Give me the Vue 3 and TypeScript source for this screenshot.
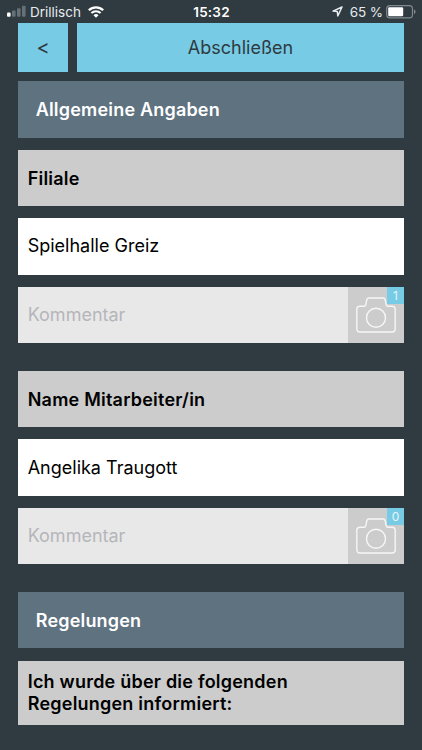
<script setup lang="ts">
interface Field {
  label: string
  value: string
  photos: number
}

const fields: Field[] = [
  { label: 'Filiale', value: 'Spielhalle Greiz', photos: 1 },
  { label: 'Name Mitarbeiter/in', value: 'Angelika Traugott', photos: 0 },
]
</script>

<template>
  <div class="screen">
    <div class="status">
      <div class="side">
        <svg class="signal" width="19" height="12" viewBox="0 0 19 12">
          <rect x="0" y="7.4" width="3.6" height="4.4" rx="1" fill="#fff" />
          <rect x="5" y="5.4" width="3.6" height="6.4" rx="1" fill="#667077" />
          <rect x="10" y="3.2" width="3.6" height="8.6" rx="1" fill="#667077" />
          <rect x="15" y="0.8" width="3.6" height="11" rx="1" fill="#667077" />
        </svg>
        <span class="carrier">Drillisch</span>
        <svg class="wifi" width="16" height="12" viewBox="0 0 16 12">
          <path d="M.8 4.2a10.4 10.4 0 0 1 14.4 0" fill="none" stroke="#fff" stroke-width="2.2" />
          <path d="M3.4 7a6.6 6.6 0 0 1 9.2 0" fill="none" stroke="#fff" stroke-width="2" />
          <path d="M5.5 9.2a3.6 3.6 0 0 1 5 0L8 11.7z" fill="#fff" />
        </svg>
      </div>
      <span class="clock">15:32</span>
      <div class="side right">
        <svg class="arrow" width="11" height="11" viewBox="0 0 11 11">
          <path d="M10 1 1 5.1l4.3.5.5 4.4z" fill="none" stroke="#e8ebed" stroke-width="1.5" stroke-linejoin="round" />
        </svg>
        <span class="percent">65 %</span>
        <svg class="battery" width="30" height="14" viewBox="0 0 30 14">
          <rect x="0.7" y="0.7" width="25.8" height="12.2" rx="3.2" fill="none" stroke="#828a8e" stroke-width="1.2" />
          <rect x="2.2" y="2.3" width="15" height="9" rx="1.2" fill="#fff" />
          <path d="M28 4.6c2 .7 2 3.8 0 4.5z" fill="#828a8e" />
        </svg>
      </div>
    </div>

    <header class="toolbar">
      <button class="back">&lt;</button>
      <button class="finish">Abschließen</button>
    </header>

    <main class="form">
      <h2 class="section">Allgemeine Angaben</h2>
      <section v-for="field in fields" :key="field.label" class="group">
        <div class="label">{{ field.label }}</div>
        <div class="value">{{ field.value }}</div>
        <div class="comment">
          <span class="placeholder">Kommentar</span>
          <button class="camera">
            <svg width="40" height="36" viewBox="0 0 40 36" fill="none" stroke="#f6f6f6" stroke-width="1.4">
              <path d="M4 9.3h3.7c1.5 0 2-.7 2.2-2l.6-3.4C10.8 2.2 11.5 1 13 1h14c1.5 0 2.2 1.2 2.500 2.9l.6 3.4c.2 1.3.7 2 2.2 2H36c2 0 3.2 1.2 3.2 3.2v19.3c0 2-1.2 3.2-3.2 3.2H4c-2 0-3.2-1.2-3.2-3.2V12.500c0-2 1.2-3.2 3.2-3.2z" />
              <circle cx="20" cy="20.7" r="9.5" />
            </svg>
            <span class="badge">{{ field.photos }}</span>
          </button>
        </div>
      </section>
      <h2 class="section">Regelungen</h2>
      <div class="label tall">Ich wurde über die folgenden<br />Regelungen informiert:</div>
    </main>
  </div>
</template>

<style>
body {
  background: #2f3a41;
}
</style>

<style scoped>
.screen {
  box-sizing: border-box;
  width: 422px;
  height: 750px;
  overflow: hidden;
  background: #2f3a41;
  font-family: Inter, "Liberation Sans", sans-serif;
  color: #000;
}
.status {
  display: flex;
  align-items: center;
  height: 22.7px;
  padding: 1px 6px 0 7px;
  box-sizing: border-box;
  font-size: 13.5px;
  line-height: 20px;
  color: #e8ebed;
}
.side {
  display: flex;
  flex: 1;
  align-items: center;
}
.right {
  justify-content: flex-end;
}
.signal {
  margin-bottom: 1px;
}
.carrier {
  margin-left: 4px;
}
.wifi {
  margin-left: 7px;
}
.clock {
  font-weight: 600;
  letter-spacing: 0.2px;
  color: #fff;
}
.arrow {
  margin-right: 7px;
}
.percent {
  letter-spacing: -0.1px;
}
.battery {
  margin-left: 3px;
}
.toolbar {
  display: flex;
  gap: 9px;
  height: 49.6px;
  padding: 0 18px;
}
button {
  border: 0;
  padding: 0;
  font: inherit;
  color: #2f3a41;
  background: #78cbe5;
}
.back {
  width: 50px;
  font-size: 20px;
}
.finish {
  flex: 1;
  font-size: 18px;
}
.form {
  display: flex;
  flex-direction: column;
  gap: 12.2px;
  padding: 9px 18px 0;
}
.section,
.label,
.value,
.comment {
  display: flex;
  align-items: center;
  box-sizing: border-box;
  height: 56.3px;
  margin: 0;
  font-size: 18px;
  line-height: 22.5px;
  white-space: nowrap;
}
.section {
  padding-top: 1.5px;
  padding-left: 17.7px;
  font-weight: 600;
  letter-spacing: 0.19px;
  color: #fff;
  background: #5e727f;
}
.group {
  display: flex;
  flex-direction: column;
  gap: 12.2px;
  margin-bottom: 15.7px;
}
.label {
  padding-top: 2.5px;
  padding-left: 9.7px;
  font-weight: 600;
  letter-spacing: 0.22px;
  background: #ccc;
}
.value {
  padding-top: 0.5px;
  padding-left: 9.7px;
  background: #fff;
}
.comment {
  justify-content: space-between;
  padding-left: 9.7px;
  background: #e8e8e8;
}
.placeholder {
  color: #b5b6ba;
}
.camera {
  position: relative;
  display: flex;
  align-items: flex-start;
  justify-content: center;
  box-sizing: border-box;
  width: 56.5px;
  height: 100%;
  padding-top: 10px;
  background: #ccc;
}
.badge {
  position: absolute;
  top: 0;
  right: 0;
  width: 17px;
  height: 17px;
  font-size: 12px;
  line-height: 17px;
  text-align: center;
  color: #e6f5fa;
  background: #78cbe5;
}
.tall {
  display: block;
  height: 64.2px;
  padding-top: 10.3px;
}
</style>
